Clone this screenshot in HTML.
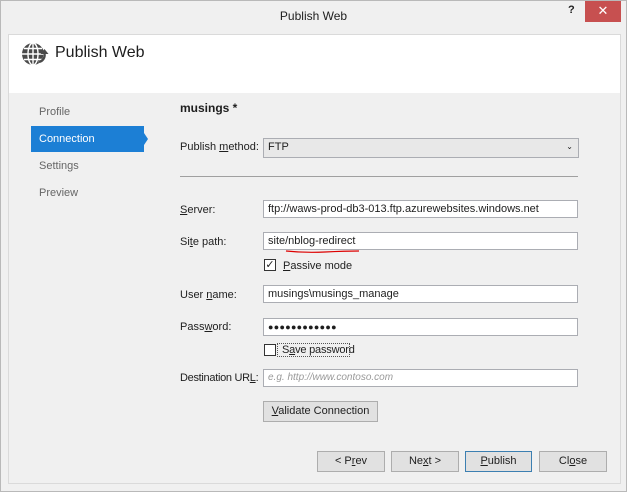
<!DOCTYPE html><html><head><style>
body{margin:0;width:630px;height:496px;background:#fff;font-family:"Liberation Sans",sans-serif;font-size:11px;color:#1e1e1e;position:relative;overflow:hidden}
.a{position:absolute}
.win{left:0;top:0;width:627px;height:492px;background:#f0f0f0;border:1px solid #b9b9b9;box-sizing:border-box}
.inp{position:absolute;left:263px;width:315px;height:18px;background:#fff;border:1px solid #abadb3;box-sizing:border-box;padding:2px 4px;font-size:11px;line-height:12px}
.lb{position:absolute;left:180px;font-size:11px}
.btn{position:absolute;top:451px;height:21px;background:#e1e1e1;border:1px solid #adadad;box-sizing:border-box;text-align:center;line-height:19px;font-size:11px}
.nav{position:absolute;left:39px;color:#666;font-size:11px}
u{text-decoration:underline}
</style></head><body>
<div class="a win"></div>
<div class="a" style="left:0;top:9px;width:627px;text-align:center;font-size:12px">Publish Web</div>
<div class="a" style="left:568px;top:4px;font-weight:bold;font-size:11px">?</div>
<div class="a" style="left:585px;top:1px;width:36px;height:21px;background:#c75050;color:#fff;text-align:center;line-height:20px;font-size:13px">✕</div>
<div class="a" style="left:8px;top:34px;width:613px;height:450px;border:1px solid #dadada;box-sizing:border-box;background:#f0f0f0"></div>
<div class="a" style="left:9px;top:35px;width:611px;height:58px;background:#fff"></div>
<svg class="a" style="left:20px;top:40px" width="30" height="28" viewBox="0 0 30 28"><circle cx="13" cy="14" r="11" fill="#4a4a4a"/><g stroke="#fff" stroke-width="1.4" fill="none"><ellipse cx="13" cy="14" rx="5" ry="11"/><line x1="2" y1="14" x2="24" y2="14"/><line x1="13" y1="3" x2="13" y2="25"/><line x1="4" y1="8.5" x2="22" y2="8.5"/><line x1="4" y1="19.5" x2="22" y2="19.5"/></g><path d="M19 23 A8 8 0 0 0 25 13" stroke="#fff" stroke-width="4" fill="none"/><path d="M19 22 A7 7 0 0 0 24.5 14" stroke="#4a4a4a" stroke-width="2.4" fill="none"/><path d="M20.5 14 L24.5 9 L28.5 14Z" fill="#4a4a4a"/></svg>
<div class="a" style="left:55px;top:44px;font-size:16px">Publish Web</div>
<div class="nav" style="top:106px">Profile</div>
<div class="a" style="left:31px;top:126px;width:113px;height:26px;background:#1c7fd5"></div>
<div class="a" style="left:144px;top:133px;width:0;height:0;border-left:4px solid #1c7fd5;border-top:6px solid transparent;border-bottom:6px solid transparent"></div>
<div class="nav" style="top:133px;color:#fff">Connection</div>
<div class="nav" style="top:160px">Settings</div>
<div class="nav" style="top:187px">Preview</div>
<div class="a" style="left:180px;top:101px;font-weight:bold;font-size:12px">musings *</div>
<div class="lb" style="top:141px">Publish <u>m</u>ethod:</div>
<div class="inp" style="top:138px;height:20px;background:#e8e8e8;width:316px">FTP<span style="position:absolute;right:5px;top:2px;font-size:8px">⌄</span></div>
<div class="a" style="left:180px;top:176px;width:398px;height:1px;background:#a0a0a0"></div>
<div class="lb" style="top:204px"><u>S</u>erver:</div>
<div class="inp" style="top:200px">ftp://waws-prod-db3-013.ftp.azurewebsites.windows.net</div>
<div class="lb" style="top:236px">Si<u>t</u>e path:</div>
<div class="inp" style="top:232px">site/nblog-redirect</div>
<svg class="a" style="left:285px;top:249px" width="75" height="5"><path d="M1 2 Q20 4 40 3 T74 2" stroke="#d00" fill="none" stroke-width="1.2"/></svg>
<div class="a" style="left:264px;top:259px;width:12px;height:12px;border:1px solid #333;box-sizing:border-box;background:#fff;font-size:11px;line-height:10px;text-align:center">✓</div>
<div class="a" style="left:283px;top:260px"><u>P</u>assive mode</div>
<div class="lb" style="top:289px">User <u>n</u>ame:</div>
<div class="inp" style="top:285px">musings\musings_manage</div>
<div class="lb" style="top:321px">Pass<u>w</u>ord:</div>
<div class="inp" style="top:318px;font-size:9px;letter-spacing:0.3px">●●●●●●●●●●●●</div>
<div class="a" style="left:264px;top:344px;width:12px;height:12px;border:1px solid #333;box-sizing:border-box;background:#fff"></div>
<div class="a" style="left:277px;top:343px;width:73px;height:14px;border:1px dotted #555;box-sizing:border-box"></div>
<div class="a" style="left:282px;top:344px;letter-spacing:-0.2px">S<u>a</u>ve password</div>
<div class="lb" style="top:372px;letter-spacing:-0.3px">Destination UR<u>L</u>:</div>
<div class="inp" style="top:369px;color:#999;font-style:italic;font-size:10px">e.g. http://www.contoso.com</div>
<div class="btn" style="left:263px;top:401px;width:115px"><u>V</u>alidate Connection</div>
<div class="btn" style="left:317px;width:68px">&lt; P<u>r</u>ev</div>
<div class="btn" style="left:391px;width:68px">Ne<u>x</u>t &gt;</div>
<div class="btn" style="left:465px;width:67px;border-color:#3c7fb1"><u>P</u>ublish</div>
<div class="btn" style="left:539px;width:68px">Cl<u>o</u>se</div>
</body></html>
